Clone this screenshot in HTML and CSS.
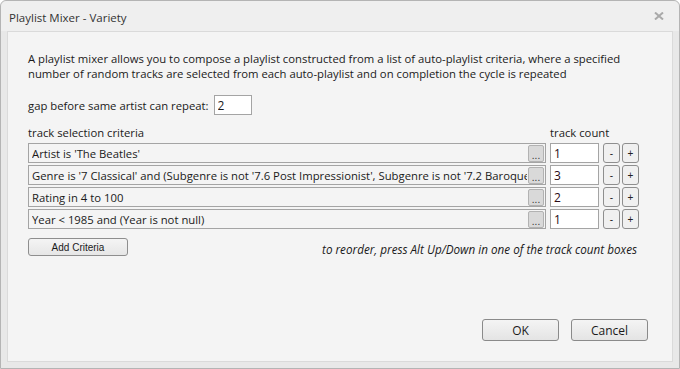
FILE: index.html
```html
<!DOCTYPE html>
<html lang="en">
<head>
    <meta charset="UTF-8">
    <title>Playlist Mixer - Variety</title>
    <link rel="stylesheet" href="styles.css">
</head>
<body>
    <div class="window">
        <div class="titlebar">
            <span class="title">Playlist Mixer - Variety</span>
            <svg class="close" width="10" height="8" viewBox="0 0 10 8">
                <path d="M1 0.5 L9 7.5 M9 0.5 L1 7.5" stroke="#a9a9a9" stroke-width="2"/>
            </svg>
        </div>

        <div class="client">
            <p class="desc">A playlist mixer allows you to compose a playlist constructed from a list of auto-playlist criteria, where a specified<br>number of random tracks are selected from each auto-playlist and on completion the cycle is repeated</p>

            <div class="gap-row">
                <span>gap before same artist can repeat:</span>
                <input type="text" class="gap-input" value="2">
            </div>

            <div class="crit-head">
                <span class="crit-label">track selection criteria</span>
                <span>track count</span>
            </div>

            <!-- criteria rows -->
            <div class="rows">
                <div class="crit"><span class="crit-text">Artist is 'The Beatles'</span><button class="dots">...</button></div>
                <input type="text" class="count" value="1">
                <button class="step">-</button>
                <button class="step">+</button>

                <div class="crit"><span class="crit-text">Genre is '7 Classical' and (Subgenre is not '7.6 Post Impressionist', Subgenre is not '7.2 Baroque</span><button class="dots">...</button></div>
                <input type="text" class="count" value="3">
                <button class="step">-</button>
                <button class="step">+</button>

                <div class="crit"><span class="crit-text">Rating in 4 to 100</span><button class="dots">...</button></div>
                <input type="text" class="count" value="2">
                <button class="step">-</button>
                <button class="step">+</button>

                <div class="crit"><span class="crit-text">Year &lt; 1985 and (Year is not null)</span><button class="dots">...</button></div>
                <input type="text" class="count" value="1">
                <button class="step">-</button>
                <button class="step">+</button>
            </div>

            <div class="add-row">
                <button class="add-btn">Add Criteria</button>
                <span class="hint">to reorder, press Alt Up/Down in one of the track count boxes</span>
            </div>

            <div class="buttons">
                <button class="dlg-btn">OK</button>
                <button class="dlg-btn">Cancel</button>
            </div>
        </div>
    </div>
</body>
</html>
```

FILE: styles.css
```css
body {
    margin: 0;
    font-family: "Open Sans", "Noto Sans", sans-serif;
    font-size: 11.3px;
    color: #1a1a1a;
    background: #ffffff;
}
.window {
    width: 680px;
    height: 369px;
    box-sizing: border-box;
    border: 1px solid #b4b4b4;
    border-radius: 6px 6px 0 0;
    background: #e8e8e8;
    display: flex;
    flex-direction: column;
}
.titlebar {
    height: 30px;
    flex: none;
    display: flex;
    align-items: center;
    justify-content: space-between;
    padding: 0 15px 0 8px;
    background: #efefef;
    border-radius: 6px 6px 0 0;
}
.title {
    font-size: 11.5px;
    color: #333333;
    margin-top: 2px;
}
.client {
    flex: 1;
    margin: 0 6px 6px 6px;
    background: #f4f4f4;
    border: 1px solid #dadada;
    display: flex;
    flex-direction: column;
    padding: 19px 0 20px 20px;
}
.desc {
    margin: 0;
    line-height: 15px;
    white-space: nowrap;
}
.gap-row {
    display: flex;
    align-items: center;
    margin-top: 14px;
    height: 20px;
}
.gap-input {
    width: 38px;
    height: 20px;
    box-sizing: border-box;
    margin-left: 5px;
    border: 1px solid #a4a4a4;
    background: #ffffff;
    font: inherit;
    font-size: 12px;
    padding: 0 3px;
    color: #1a1a1a;
}
.crit-head {
    display: flex;
    margin-top: 10px;
    height: 15px;
    line-height: 15px;
}
.crit-label {
    width: 522px;
}
.rows {
    display: grid;
    grid-template-columns: 518px 49px 17px 17px;
    column-gap: 4px;
    row-gap: 2px;
    grid-auto-rows: 20px;
    margin-top: 3px;
}
.crit {
    display: flex;
    align-items: center;
    border: 1px solid #a4a4a4;
    background: #f4f4f4;
    padding: 0 1px 0 3px;
    overflow: hidden;
    min-width: 0;
}
.crit-text {
    flex: 1;
    white-space: nowrap;
    overflow: hidden;
}
.dots {
    width: 16px;
    height: 17px;
    flex: none;
    padding: 0;
    border: 1px solid #b2b2b2;
    border-radius: 2px;
    background: #d9d9d9;
    font-family: "Liberation Sans", sans-serif;
    font-size: 10px;
    line-height: 20px;
    color: #333333;
    margin-left: 1px;
}
.count {
    box-sizing: border-box;
    width: 49px;
    height: 20px;
    border: 1px solid #a4a4a4;
    background: #ffffff;
    font: inherit;
    font-size: 12px;
    padding: 0 3px;
    color: #2a0a14;
}
.step {
    width: 17px;
    height: 20px;
    padding: 0;
    border: 1px solid #8e8e8e;
    border-radius: 3px;
    background: #f0f0f0;
    font-family: "Liberation Sans", sans-serif;
    font-size: 10px;
    color: #222222;
}
.step + .step {
    margin-left: -2px;
}
.add-row {
    display: flex;
    align-items: center;
    justify-content: space-between;
    margin-top: 8px;
    padding-right: 35px;
}
.add-btn {
    width: 100px;
    height: 18px;
    padding: 0;
    border: 1px solid #8e8e8e;
    border-radius: 3px;
    background: linear-gradient(#f4f4f4, #e6e6e6);
    font-family: "Liberation Sans", sans-serif;
    font-size: 10px;
    color: #1a1a1a;
}
.hint {
    font-style: italic;
    font-size: 11.7px;
    margin-top: 4px;
}
.buttons {
    margin-top: auto;
    display: flex;
    justify-content: flex-end;
    gap: 12px;
    padding-right: 24px;
}
.dlg-btn {
    width: 77px;
    height: 22px;
    padding: 0;
    border: 1px solid #8a8a8a;
    border-radius: 3px;
    background: linear-gradient(#f4f4f4, #e4e4e4);
    font: inherit;
    font-size: 12px;
    color: #1a1a1a;
}
```
